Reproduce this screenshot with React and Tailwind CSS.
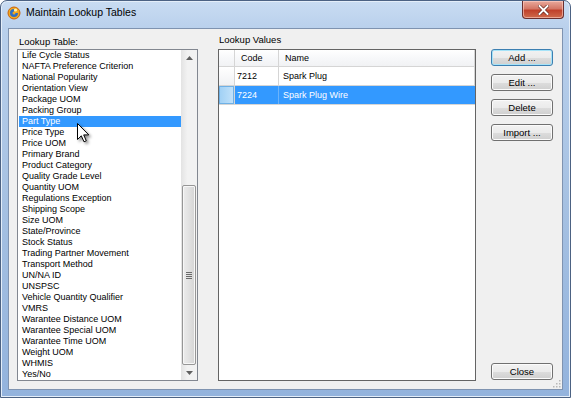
import React from 'react';

const tables = [
  'Life Cycle Status',
  'NAFTA Preference Criterion',
  'National Popularity',
  'Orientation View',
  'Package UOM',
  'Packing Group',
  'Part Type',
  'Price Type',
  'Price UOM',
  'Primary Brand',
  'Product Category',
  'Quality Grade Level',
  'Quantity UOM',
  'Regulations Exception',
  'Shipping Scope',
  'Size UOM',
  'State/Province',
  'Stock Status',
  'Trading Partner Movement',
  'Transport Method',
  'UN/NA ID',
  'UNSPSC',
  'Vehicle Quantity Qualifier',
  'VMRS',
  'Warantee Distance UOM',
  'Warantee Special UOM',
  'Warantee Time UOM',
  'Weight UOM',
  'WHMIS',
  'Yes/No',
];

const values = [
  { code: '7212', name: 'Spark Plug' },
  { code: '7224', name: 'Spark Plug Wire' },
];

const Button = ({ children, primary }) => (
  <button
    className={
      'h-[17px] w-[62px] rounded-[3px] border text-[9.5px] leading-none text-black bg-[linear-gradient(#f2f2f2_0%,#ebebeb_50%,#dddddd_51%,#cfcfcf_100%)] ' +
      (primary
        ? 'border-[#3c7fb1] shadow-[inset_0_0_0_1px_#a6e3f8]'
        : 'border-[#707070] shadow-[inset_0_0_0_1px_#fbfbfb]')
    }
  >
    {children}
  </button>
);

const Cursor = () => (
  <svg
    className="absolute left-[76px] top-[122px] drop-shadow-[2px_2px_1.5px_rgba(0,0,0,0.45)]"
    width="14"
    height="21"
    viewBox="0 0 14 21"
  >
    <path
      d="M0.5 0.5 L0.5 16.5 L4.3 12.8 L7 18.8 L9.3 17.8 L6.7 11.9 L11.8 11.9 Z"
      fill="#fff"
      stroke="#000"
      strokeWidth="1"
      strokeLinejoin="round"
    />
  </svg>
);

const Scrollbar = () => (
  <div className="w-[16px] flex flex-col bg-[linear-gradient(90deg,#e3e3e3,#f2f2f2_40%,#f2f2f2)]">
    <div className="h-[16px] flex items-center justify-center">
      <svg width="7" height="4" viewBox="0 0 7 4">
        <path d="M0 4 L3.5 0 L7 4 Z" fill="#606060" />
      </svg>
    </div>
    <div className="flex-1" />
    <div className="h-[180px] mx-[1px] rounded-[2px] border border-[#969696] bg-[linear-gradient(90deg,#ececec,#e1e1e1_50%,#d4d4d4)] shadow-[inset_0_0_0_1px_#f7f7f7] flex items-center justify-center">
      <div className="flex flex-col gap-[1px]">
        <div className="w-[6px] h-[1px] bg-[#6a6a6a]" />
        <div className="w-[6px] h-[1px] bg-[#6a6a6a]" />
        <div className="w-[6px] h-[1px] bg-[#6a6a6a]" />
        <div className="w-[6px] h-[1px] bg-[#6a6a6a]" />
      </div>
    </div>
    <div className="h-[15px] flex items-center justify-center">
      <svg width="7" height="4" viewBox="0 0 7 4">
        <path d="M0 0 L3.5 4 L7 0 Z" fill="#606060" />
      </svg>
    </div>
  </div>
);

export default function App() {
  return (
    <div className="relative w-[571px] h-[398px] overflow-hidden flex flex-col rounded-t-[7px] border border-[#4c6283] bg-[linear-gradient(#c9dcf2_0px,#b9d0ec_28px,#a6c1e2_200px,#93b3dd_398px)] shadow-[inset_0_0_0_1px_#e4eef9] font-['Liberation_Sans',Arial,sans-serif] text-black">
      {/* title bar */}
      <div className="h-[27px] flex justify-between">
        <div className="flex items-center gap-[5px] pl-[6px] pb-[3px]">
          <svg width="14" height="14" viewBox="0 0 14 14">
            <circle cx="7" cy="7" r="6" fill="#f1a820" />
            <circle cx="7" cy="7" r="6" fill="none" stroke="#c8620c" strokeWidth="1" />
            <path d="M7 3 A4 4 0 1 0 11 7 L8.5 7 A1.5 1.5 0 1 1 7 5.5 Z" fill="#2f6fc4" />
            <circle cx="8.5" cy="4" r="1.6" fill="#fff3b0" />
          </svg>
          <span className="text-[10.5px] text-black">Maintain Lookup Tables</span>
        </div>
        <div className="mr-[6px] w-[42px] h-[18px] rounded-b-[4px] border border-t-0 border-[#6a2f2f] bg-[linear-gradient(#e9a99c,#d47766_45%,#c0412b_55%,#cf6a4c)] shadow-[inset_0_0_0_1px_rgba(255,210,200,0.6)] flex items-center justify-center">
          <svg width="11" height="10" viewBox="0 0 11 10">
            <path
              d="M1.5 1 L9.5 9 M9.5 1 L1.5 9"
              stroke="#5a1a12"
              strokeWidth="3.2"
              strokeLinecap="square"
            />
            <path
              d="M1.5 1 L9.5 9 M9.5 1 L1.5 9"
              stroke="#fff"
              strokeWidth="2"
              strokeLinecap="square"
            />
          </svg>
        </div>
      </div>

      {/* client area */}
      <div className="relative mx-[7px] mb-[7px] flex-1 border border-[#7f93b0] bg-[#f0f0f0] flex pt-[6px] pb-[8px] pl-[8px] text-[9px]">
        {/* lookup table list */}
        <div className="w-[181px] flex flex-col">
          <div className="h-[14px] pl-[2px] leading-[13px] text-[9.5px]">Lookup Table:</div>
          <div className="flex-1 border border-[#828790] bg-white flex">
            <div className="flex-1">
              {tables.map((t) => (
                <div
                  key={t}
                  className={
                    'h-[11px] leading-[11px] pl-[3px] ml-[1px] whitespace-nowrap ' +
                    (t === 'Part Type' ? 'bg-[#3399ff] text-white' : '')
                  }
                >
                  {t}
                </div>
              ))}
            </div>
            <Scrollbar />
          </div>
        </div>

        {/* lookup values grid */}
        <div className="ml-[20px] w-[258px] flex flex-col">
          <div className="h-[14px] pl-[1px] leading-[10px] text-[9.5px]">Lookup Values</div>
          <div className="flex-1 border border-[#646464] bg-white">
            <div className="h-[17px] flex border-b border-[#d5d5d5] bg-[linear-gradient(#ffffff,#f7f8fa_50%,#f1f2f4)]">
              <div className="w-[16px] border-r border-[#d5d5d5]" />
              <div className="w-[44px] border-r border-[#d5d5d5] pl-[6px] leading-[17px]">Code</div>
              <div className="flex-1 pl-[6px] leading-[17px] border-r border-[#d5d5d5]">Name</div>
            </div>
            {values.map((v, i) => {
              const sel = i === 1;
              return (
                <div key={v.code} className="h-[19px] flex border-b border-[#d5d5d5]">
                  <div
                    className={
                      'w-[16px] border-r border-[#d5d5d5] ' +
                      (sel
                        ? 'bg-[linear-gradient(90deg,#9fd0f5,#c3e2fa)] shadow-[inset_0_0_0_1px_#6fb1e6]'
                        : 'bg-[linear-gradient(#ffffff,#f1f2f4)]')
                    }
                  />
                  <div
                    className={
                      'w-[44px] border-r leading-[19px] pl-[2px] ' +
                      (sel ? 'bg-[#3399ff] text-white border-[#6bb3fb]' : 'border-[#d5d5d5]')
                    }
                  >
                    {v.code}
                  </div>
                  <div
                    className={
                      'flex-1 leading-[19px] pl-[4px] border-r ' +
                      (sel ? 'bg-[#3399ff] text-white border-[#3399ff]' : 'border-[#d5d5d5]')
                    }
                  >
                    {v.name}
                  </div>
                </div>
              );
            })}
          </div>
        </div>

        {/* buttons */}
        <div className="ml-[15px] flex flex-col justify-between pt-[14px] pb-[1px]">
          <div className="flex flex-col gap-[8px]">
            <Button primary>Add ...</Button>
            <Button>Edit ...</Button>
            <Button>Delete</Button>
            <Button>Import ...</Button>
          </div>
          <Button>Close</Button>
        </div>

        {/* size grip */}
        <svg className="absolute right-[1px] bottom-[1px]" width="9" height="9" viewBox="0 0 9 9">
          <g fill="#b8b8b8">
            <rect x="7" y="1" width="1.5" height="1.5" />
            <rect x="4" y="4" width="1.5" height="1.5" />
            <rect x="7" y="4" width="1.5" height="1.5" />
            <rect x="1" y="7" width="1.5" height="1.5" />
            <rect x="4" y="7" width="1.5" height="1.5" />
            <rect x="7" y="7" width="1.5" height="1.5" />
          </g>
        </svg>
      </div>

      <Cursor />
    </div>
  );
}
